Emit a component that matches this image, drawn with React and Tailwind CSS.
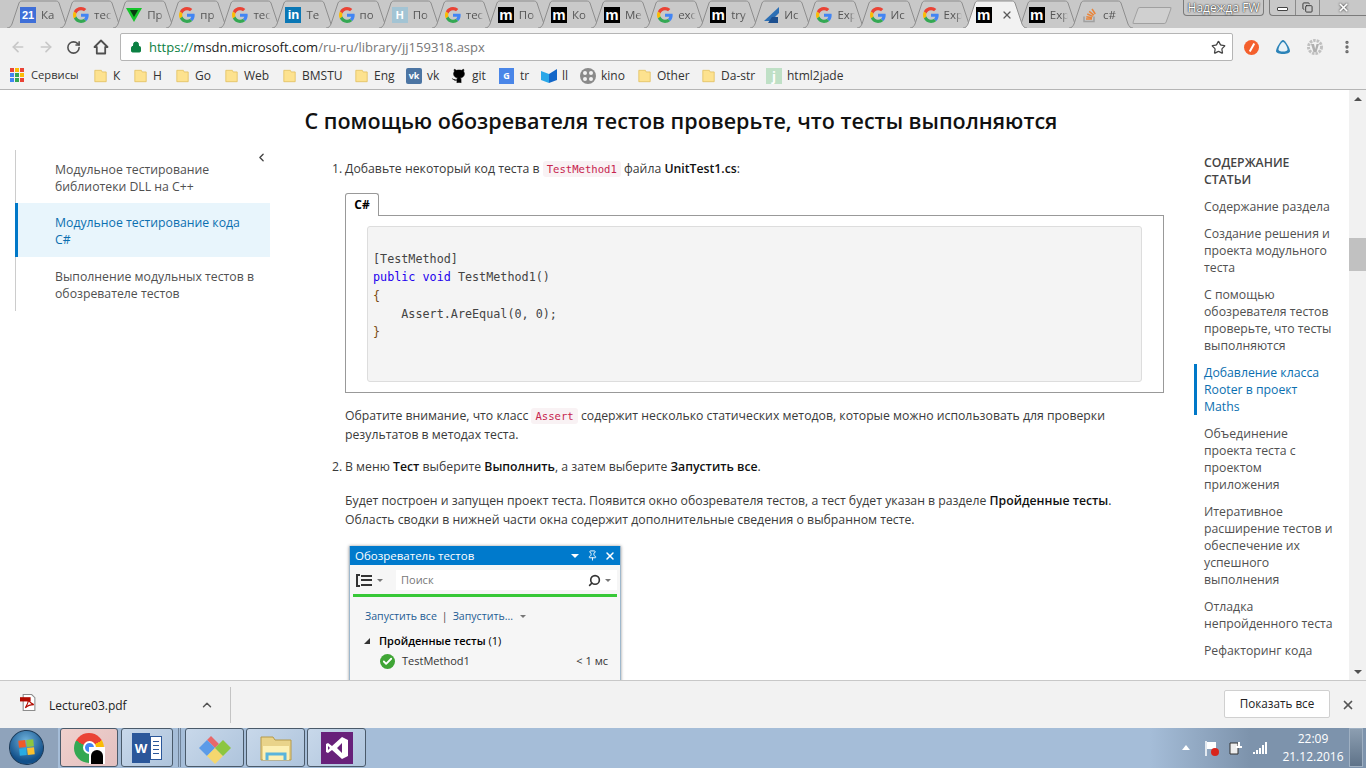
import { ArrowLeft, ArrowRight, RotateCw, Star, Lock, MoreVertical, ChevronUp, ChevronLeft, X, Search, Pin, Copy, Github, Check } from "lucide-react";

const GoogleIcon = () => (
  <svg viewBox="0 0 48 48" className="w-[16px] h-[16px] shrink-0">
    <path fill="#ea4335" d="M24 9.5c3.5 0 6.700 1.300 9.100 3.500l6.800-6.800C35.800 2.400 30.300 0 24 0 14.600 0 6.500 5.400 2.600 13.200l7.900 6.100C12.400 13.600 17.700 9.500 24 9.500z" />
    <path fill="#4285f4" d="M47 24.500c0-1.600-.2-3.200-.4-4.500H24v9h12.900c-.6 3-2.200 5.400-4.700 7.100l7.600 5.900C44.300 37.900 47 31.800 47 24.500z" />
    <path fill="#fbbc05" d="M10.500 28.700C10 27.300 9.700 25.700 9.700 24s.3-3.300.8-4.700l-7.900-6.100C.9 16.400 0 20.100 0 24s.9 7.600 2.600 10.800l7.900-6.100z" />
    <path fill="#34a853" d="M24 48c6.300 0 11.800-2.100 15.800-5.900l-7.600-5.900c-2.200 1.500-4.900 2.300-8.200 2.300-6.300 0-11.600-4.100-13.500-9.800l-7.900 6.100C6.500 42.600 14.600 48 24 48z" />
  </svg>
);

const MediumIcon = () => (
  <div className="w-[16px] h-[16px] shrink-0 bg-black text-white flex items-center justify-center text-[15px] leading-none font-bold font-['Liberation_Sans',sans-serif] pb-[2px]">m</div>
);

const tabIcon = (kind) => {
  if (kind === "g") return <GoogleIcon />;
  if (kind === "m") return <MediumIcon />;
  if (kind === "cal") return <div className="w-[16px] h-[16px] shrink-0 bg-[#3f6fd8] text-white text-[11px] leading-[17px] text-center font-bold font-['Liberation_Sans',sans-serif]">21</div>;
  if (kind === "v")
    return (
      <svg viewBox="0 0 16 16" className="w-[16px] h-[16px] shrink-0">
        <path d="M0 1h16L8 15z" fill="#16c42c" />
        <path d="M4 3h8L8 10z" fill="#0a3a12" />
      </svg>
    );
  if (kind === "in") return <div className="w-[16px] h-[16px] shrink-0 bg-[#0a77b5] text-white text-[13px] leading-[16px] text-center font-bold font-['Liberation_Sans',sans-serif]">in</div>;
  if (kind === "h") return <div className="w-[16px] h-[16px] shrink-0 bg-[#a3c4d4] text-white text-[11px] leading-[16px] text-center font-bold font-['Liberation_Sans',sans-serif]">Н</div>;
  if (kind === "blue")
    return (
      <svg viewBox="0 0 16 16" className="w-[16px] h-[16px] shrink-0">
        <path d="M16 0v6L8 14H1z" fill="#2c6fb5" />
        <path d="M9 10h6v6H5z" fill="#1c4f8f" />
      </svg>
    );
  return (
    <svg viewBox="0 0 16 16" className="w-[16px] h-[16px] shrink-0" fill="none" stroke="#e8843a" strokeWidth="1.500">
      <path d="M2 9.500v5h10v-5" stroke="#a0a0a0" />
      <path d="M4 12h6M4.300 9.700l5.800 1M5.300 7l5.500 2.400M7.200 4.300l4.600 3.800M10 2l3.300 5" />
    </svg>
  );
};

const tabs = [
  ["cal", "Ка"], ["g", "тес"], ["v", "Пр"], ["g", "пр"], ["g", "тес"], ["in", "Те"], ["g", "по"], ["h", "По"], ["g", "тес"],
  ["m", "По"], ["m", "Ко"], ["m", "Ме"], ["g", "exc"], ["m", "try"], ["blue", "Ис"], ["g", "Exp"], ["g", "Ис"], ["g", "Exp"],
  ["m", "", true], ["m", "Exp"], ["so", "c#"],
];

const Tab = ({ kind, label, active }) => (
  <div className={`relative w-[53.100px] h-[28px] shrink-0 ${active ? "z-10" : ""}`}>
    <svg viewBox="0 0 64 28" preserveAspectRatio="none" className="absolute left-0 top-0 w-[64px] h-[28px]">
      <path d="M0 28 C3 28 4 26 5 24 L12 3 C13 1 14 1 16 1 H48 C50 1 51 1 52 3 L59 24 C60 26 61 28 64 28" fill={active ? "#f2f2f2" : "#c9c9c9"} stroke="#8e8e8e" />
    </svg>
    <div className="relative flex items-center gap-[5px] pl-[13px] pt-[7px] w-[60px]">
      {tabIcon(kind)}
      {active ? (
        <X className="w-[12px] h-[12px] ml-[4px] text-[#5a5a5a]" strokeWidth={2.500} />
      ) : (
        <span className="w-[18px] overflow-hidden whitespace-nowrap text-[11.500px] leading-[16px] text-[#555] [mask-image:linear-gradient(to_right,black_65%,transparent)]">{label}</span>
      )}
    </div>
  </div>
);

const Folder = () => (
  <svg viewBox="0 0 16 16" className="w-[13px] h-[16px] shrink-0">
    <path d="M1 1h8l1 2h5v12H1z" fill="#fde28f" stroke="#e3c060" />
  </svg>
);

const bookmarks = [
  { label: "К", w: "w-[40px]" },
  { label: "Н", w: "w-[42px]" },
  { label: "Go", w: "w-[49px]" },
  { label: "Web", w: "w-[58px]" },
  { label: "BMSTU", w: "w-[72px]" },
  { label: "Eng", w: "w-[51px]" },
  { label: "vk", w: "w-[45px]", icon: <div className="w-[16px] h-[16px] bg-[#4c75a3] rounded-[2px] text-white text-[9px] leading-[16px] text-center font-bold">vk</div> },
  { label: "git", w: "w-[48px]", icon: <Github className="w-[16px] h-[16px] text-black fill-black" strokeWidth={1} /> },
  { label: "tr", w: "w-[42px]", icon: <div className="w-[15px] h-[16px] bg-[#4a86e8] text-white text-[9px] leading-[15px] text-center font-bold">G</div> },
  { label: "ll", w: "w-[39px]", icon: <svg viewBox="0 0 16 16" className="w-[16px] h-[16px]"><path d="M0 3l8 3v9l-8-3z" fill="#2aa7e8" /><path d="M16 1v11l-8 3V6z" fill="#1367c9" /></svg> },
  {
    label: "kino",
    w: "w-[58px]",
    icon: (
      <div className="w-[16px] h-[16px] rounded-full bg-[#8a8a8a] grid grid-cols-2 gap-[2px] p-[3px]">
        <div className="rounded-full bg-[#f2f2f2]" />
        <div className="rounded-full bg-[#f2f2f2]" />
        <div className="rounded-full bg-[#f2f2f2]" />
        <div className="rounded-full bg-[#f2f2f2]" />
      </div>
    ),
  },
  { label: "Other", w: "w-[64px]" },
  { label: "Da-str", w: "w-[64px]" },
  { label: "html2jade", w: "w-[70px]", icon: <div className="w-[16px] h-[16px] bg-[#bfe0c6] text-white text-[13px] leading-[16px] text-center font-bold">j</div> },
];

const TabStrip = () => (
  <div className="h-[28px] bg-[#c8c8c8] flex pl-[7px] relative shrink-0">
    {tabs.map(([kind, label, active], i) => (
      <Tab key={i} kind={kind} label={label} active={active} />
    ))}
    <div className="w-[34px] h-[17px] mt-[7px] ml-[13px] shrink-0 bg-[#d0d0d0] border border-[#a0a0a0] -skew-x-[20deg] rounded-[2px]" />
    <div className="absolute left-[1183px] top-0 h-[16px] w-[81px] bg-[#c8c8c8] border border-t-0 border-[#7b7b7b] rounded-b-[4px] text-white text-[12px] leading-[15px] text-center [text-shadow:0_0_2px_#222,0_0_1px_#222]">Надежда FW</div>
    <div className="absolute left-[1269px] top-0 h-[16px] w-[97px] bg-[#c8c8c8] border border-t-0 border-r-0 border-[#7b7b7b] rounded-bl-[4px] flex items-center">
      <div className="w-[25px] h-full flex items-center justify-center"><div className="w-[11px] h-[4px] bg-white border border-[#444] rounded-[1px] mt-[3px]" /></div>
      <div className="w-[25px] h-full flex items-center justify-center border-x border-[#8a8a8a]"><Copy className="w-[11px] h-[11px] text-[#333]" /></div>
      <div className="flex-1 h-full flex items-center justify-center"><X className="w-[13px] h-[13px] text-white [filter:drop-shadow(0_0_1px_#222)]" strokeWidth={3} /></div>
    </div>
  </div>
);

const Toolbar = () => (
  <div className="h-[34px] bg-[#f2f2f2] flex items-start pt-[5px] shrink-0">
    <div className="flex items-center gap-[12px] pl-[10px] pt-[6px] w-[120px]">
      <ArrowLeft className="w-[16px] h-[16px] text-[#c8c8c8]" strokeWidth={2.500} />
      <ArrowRight className="w-[16px] h-[16px] text-[#c8c8c8]" strokeWidth={2.500} />
      <RotateCw className="w-[15px] h-[15px] text-[#505050]" strokeWidth={2.500} />
      <svg viewBox="0 0 16 16" className="w-[16px] h-[16px]" fill="none" stroke="#505050" strokeWidth="1.800">
        <path d="M8 1.500L1.500 8h2.300v6.500h8.400V8h2.300z" strokeLinejoin="round" />
      </svg>
    </div>
    <div className="w-[1113px] h-[28px] bg-white border border-[#b5b5b5] rounded-[2px] flex items-center pl-[9px] pr-[6px] text-[13px]">
      <Lock className="w-[12px] h-[12px] text-[#0b8043] fill-[#0b8043] mr-[7px]" />
      <span className="text-[#0b8043] pt-px">https://</span>
      <span className="text-[#222] pt-px">msdn.microsoft.com</span>
      <span className="text-[#777] pt-px">/ru-ru/library/jj159318.aspx</span>
      <Star className="w-[15px] h-[15px] ml-auto text-[#444]" strokeWidth={2} />
    </div>
    <div className="flex items-center pl-[11px] pt-[6px] gap-[16px]">
      <div className="w-[15px] h-[15px] rounded-full bg-[#f4602d] flex items-center justify-center"><div className="w-[2px] h-[9px] bg-white rotate-[30deg]" /></div>
      <svg viewBox="0 0 16 16" className="w-[16px] h-[16px]">
        <path d="M8 1C6 1 1 9 1 12c0 2 3 3 7 3s7-1 7-3c0-3-5-11-7-11z" fill="#2b83b8" />
        <path d="M8 3C6.500 3 3.500 8 3.500 10.500c0 1.500 2 2 4.500 2s4.500-.5 4.500-2C12.500 8 9.500 3 8 3z" fill="#e8f2f8" />
      </svg>
      <svg viewBox="0 0 16 16" className="w-[16px] h-[16px]">
        <circle cx="8" cy="8" r="6.500" fill="none" stroke="#c0c0c0" strokeWidth="3" strokeDasharray="2.500 1" />
        <path d="M4 5h3l1.200 5 1.300-5H12l-2.500 8h-3z" fill="#b0b0b0" />
      </svg>
      <MoreVertical className="w-[16px] h-[16px] text-[#666]" strokeWidth={3} />
    </div>
  </div>
);

const BookmarksBar = () => (
  <div className="h-[28px] bg-[#f2f2f2] border-b border-[#b5b5b5] flex items-center pl-[10px] text-[12px] text-[#333] shrink-0">
    <div className="w-[84px] flex items-center gap-[7px]">
      <div className="grid grid-cols-3 gap-[1px] w-[14px] shrink-0">
        <div className="h-[4px] bg-[#ea4335]" />
        <div className="h-[4px] bg-[#fbbc05]" />
        <div className="h-[4px] bg-[#ea4335]" />
        <div className="h-[4px] bg-[#4285f4]" />
        <div className="h-[4px] bg-[#34a853]" />
        <div className="h-[4px] bg-[#fbbc05]" />
        <div className="h-[4px] bg-[#4285f4]" />
        <div className="h-[4px] bg-[#34a853]" />
        <div className="h-[4px] bg-[#ea4335]" />
      </div>
      <span className="text-[11.200px]">Сервисы</span>
    </div>
    {bookmarks.map((b) => (
      <div key={b.label} className={`${b.w} flex items-center shrink-0`}>
        <div className={`${b.icon ? "w-[21px]" : "w-[19px]"} shrink-0`}>{b.icon || <Folder />}</div>
        <span className="whitespace-nowrap">{b.label}</span>
      </div>
    ))}
  </div>
);

const LeftNav = () => (
  <div className="w-[255px] ml-[15px] shrink-0 pt-[60px]">
    <div className="relative border-l border-[#ccc] text-[12.250px] leading-[17px] text-[#505050]">
      <ChevronLeft className="absolute left-[239px] top-[1px] w-[13px] h-[13px] text-[#444]" strokeWidth={2.500} />
      <div className="h-[53px] pl-[39px] pr-[15px] pt-[11px]">Модульное тестирование библиотеки DLL на C++</div>
      <div className="h-[54px] pl-[37px] pr-[15px] pt-[11px] bg-[#e8f5fc] border-l-[3px] border-[#0078c8] text-[#0b6fb0] -ml-px">Модульное тестирование кода C#</div>
      <div className="h-[54px] pl-[39px] pr-[15px] pt-[11px]">Выполнение модульных тестов в обозревателе тестов</div>
    </div>
  </div>
);

const Code = ({ children }) => (
  <code className="bg-[#f9f2f4] text-[#c7254e] rounded-[3px] px-[4px] py-[2px] text-[10.600px] leading-none font-['DejaVu_Sans_Mono',monospace]">{children}</code>
);

const Arrow = () => <div className="w-0 h-0 border-x-[3px] border-x-transparent border-t-[3px] border-t-[#777]" />;

const TestExplorer = () => (
  <div className="w-[272px] h-[140px] ml-[4px] mt-[17px] bg-[#f6f6f6] border-x border-[#9fb8cc] shadow-[0_0_3px_#999] overflow-hidden font-['Open_Sans',sans-serif] text-[#333]">
    <div className="h-[19px] bg-[#007acc] text-white text-[11.500px] leading-[19px] pl-[5px] pr-[4px] flex items-center">
      <span>Обозреватель тестов</span>
      <div className="ml-auto flex items-center gap-[4px]">
        <div className="w-0 h-0 border-x-[4px] border-x-transparent border-t-[4px] border-t-white" />
        <Pin className="w-[11px] h-[11px] ml-[4px]" />
        <X className="w-[12px] h-[12px] ml-[2px]" strokeWidth={3} />
      </div>
    </div>
    <div className="flex items-center pl-[6px] pr-[3px] pt-[5px]">
      <div className="w-[40px] flex items-center gap-[5px] text-[#333]">
        <div className="w-[16px] h-[13px] flex gap-[1px]">
          <div className="w-[4px] border-2 border-r-0 border-[#333]" />
          <div className="flex-1 flex flex-col justify-between py-[1px]">
            <div className="h-[2px] bg-[#333]" />
            <div className="h-[2px] bg-[#333]" />
            <div className="h-[2px] bg-[#333]" />
          </div>
        </div>
        <Arrow />
      </div>
      <div className="flex-1 h-[20px] bg-white flex items-center pl-[5px] pr-[6px] text-[11px] text-[#777]">
        <span>Поиск</span>
        <Search className="w-[13px] h-[13px] ml-auto text-[#333] -scale-x-100" strokeWidth={3} />
        <div className="ml-[4px]"><Arrow /></div>
      </div>
    </div>
    <div className="h-[3px] bg-[#37c837] mx-[3px] mt-[4px]" />
    <div className="pl-[15px] pt-[12px] text-[10.600px] leading-[14px] text-[#1e5d94] flex items-center">
      <span>Запустить все</span>
      <span className="mx-[5px] text-[#444]">|</span>
      <span>Запустить...</span>
      <div className="ml-[7px]"><Arrow /></div>
    </div>
    <div className="pl-[14px] pt-[11px] text-[11px] leading-[14px] flex items-center gap-[9px]">
      <div className="w-0 h-0 border-l-[6px] border-l-transparent border-b-[6px] border-b-[#333]" />
      <span className="text-black"><b className="font-semibold">Пройденные тесты</b> (1)</span>
    </div>
    <div className="pl-[30px] pr-[12px] pt-[5px] text-[11px] flex items-center">
      <div className="w-[15px] h-[15px] rounded-full bg-[#3fa535] flex items-center justify-center"><Check className="w-[11px] h-[11px] text-white" strokeWidth={4} /></div>
      <span className="ml-[7px]">TestMethod1</span>
      <span className="ml-auto">&lt; 1 мс</span>
    </div>
  </div>
);

const Main = () => (
  <div className="w-[834px] ml-[60px] shrink-0 text-[12.250px] text-[#3a3a3a]">
    <div className="flex pt-[69px] h-[91px]">
      <span className="w-[15px] pl-[2px] leading-[20px]">1.</span>
      <p className="leading-[20px]">Добавьте некоторый код теста в <Code>TestMethod1</Code> файла <b className="font-semibold text-[#111]">UnitTest1.cs</b>:</p>
    </div>
    <div className="ml-[15px] w-[819px] mt-[12px]">
      <div className="w-[34px] h-[23px] relative z-10 bg-white border border-b-0 border-[#999] rounded-t-[3px] text-center font-bold text-[12px] leading-[21px] text-black">C#</div>
      <div className="h-[178px] -mt-px border border-[#999] px-[21px] pt-[10px]">
        <pre className="h-[156px] bg-[#f4f4f4] border border-[#ddd] rounded-[3px] pl-[5px] pt-[23px] text-[11.750px] leading-[18.300px] text-[#444] font-['DejaVu_Sans_Mono',monospace]">
          {"[TestMethod]\n"}
          <span className="text-[#2200ee]">public void</span>
          {" TestMethod1()\n"}
          <span className="text-[#7a4a10]">{"{"}</span>
          {"\n    Assert.AreEqual(0, 0);\n"}
          <span className="text-[#7a4a10]">{"}"}</span>
        </pre>
      </div>
      <p className="pt-[13px] leading-[19px]">Обратите внимание, что класс <Code>Assert</Code> содержит несколько статических методов, которые можно использовать для проверки результатов в методах теста.</p>
    </div>
    <div className="flex pt-[13px] leading-[20px]">
      <span className="w-[15px] pl-[2px]">2.</span>
      <p>В меню <b className="font-semibold text-[#111]">Тест</b> выберите <b className="font-semibold text-[#111]">Выполнить</b>, а затем выберите <b className="font-semibold text-[#111]">Запустить все</b>.</p>
    </div>
    <div className="ml-[15px] w-[819px]">
      <p className="pt-[14px] leading-[19px]">Будет построен и запущен проект теста. Появится окно обозревателя тестов, а тест будет указан в разделе <b className="font-semibold text-[#111]">Пройденные тесты</b>. Область сводки в нижней части окна содержит дополнительные сведения о выбранном тесте.</p>
      <TestExplorer />
    </div>
  </div>
);

const outline = [
  "Содержание раздела",
  "Создание решения и проекта модульного теста",
  "С помощью обозревателя тестов проверьте, что тесты выполняются",
  "Добавление класса Rooter в проект Maths",
  "Объединение проекта теста с проектом приложения",
  "Итеративное расширение тестов и обеспечение их успешного выполнения",
  "Отладка непройденного теста",
  "Рефакторинг кода",
];

const RightNav = () => (
  <div className="w-[155px] ml-[30px] shrink-0 pt-[64px] text-[12.250px] leading-[17px] text-[#505050]">
    <div className="pl-[10px] font-semibold text-[#444] mb-[10px]">СОДЕРЖАНИЕ<br />СТАТЬИ</div>
    {outline.map((item, i) => (
      <div key={item} className={i === 3 ? "border-l-[3px] border-[#0078c8] pl-[7px] pr-[24px] text-[#0b6fb0] mb-[10px]" : "pl-[10px] pr-[12px] mb-[10px]"}>
        {item}
      </div>
    ))}
  </div>
);

const Scrollbar = () => (
  <div className="w-[17px] ml-auto bg-[#f1f1f1] shrink-0 flex flex-col items-center h-full">
    <div className="h-[17px] flex items-center justify-center"><div className="w-0 h-0 border-x-[4px] border-x-transparent border-b-[4px] border-b-[#505050]" /></div>
    <div className="w-[17px] h-[33px] mt-[131px] bg-[#c1c1c1]" />
    <div className="mt-auto h-[17px] flex items-center justify-center"><div className="w-0 h-0 border-x-[4px] border-x-transparent border-t-[4px] border-t-[#505050]" /></div>
  </div>
);

const DownloadShelf = () => (
  <div className="h-[48px] bg-[#f2f2f2] border-t border-[#c8c8c8] flex items-center pl-[20px] pr-[11px] shrink-0">
    <svg viewBox="0 0 16 16" className="w-[17px] h-[17px] mb-[4px] shrink-0">
      <path d="M3 .5h8l3 3v12H3z" fill="#fff" stroke="#8c8c8c" />
      <path d="M0 3h10v4H0z" fill="#b30b00" />
      <path d="M5 13c2-3 3-6 3-8 1 3 2 4 5 5-3 0-6 1-8 3z" fill="none" stroke="#b30b00" />
    </svg>
    <span className="ml-[12px] mt-[3px] text-[12px] text-[#222]">Lecture03.pdf</span>
    <ChevronUp className="w-[14px] h-[14px] ml-[73px] text-[#555]" strokeWidth={2.500} />
    <div className="w-px h-[36px] bg-[#c4c4c4] ml-[16px]" />
    <button className="ml-auto w-[106px] h-[28px] mb-[2px] bg-white border border-[#d0d0d0] rounded-[2px] text-[11.700px] text-[#222]">Показать все</button>
    <X className="w-[14px] h-[14px] ml-[11px] text-[#555]" strokeWidth={3} />
  </div>
);

const TaskButton = ({ w, active, children }) => (
  <div className={`${w} h-[39px] shrink-0 rounded-[3px] border border-[#4a5a6a] flex items-center justify-center ${active ? "bg-[linear-gradient(135deg,#f0d0cc,#e2c0c0)]" : "bg-[linear-gradient(135deg,#c8d8ea,#aec4dc)]"}`}>
    {children}
  </div>
);

const Taskbar = () => (
  <div className="h-[40px] shrink-0 flex items-end pb-px bg-[linear-gradient(to_right,#8fa3bb_0,#8fa3bb_58px,#a5bdd8_58px,#a5bdd8_1150px,#7d93ac_1250px,#7d93ac_100%)] font-['Open_Sans',sans-serif]">
    <div className="w-[60px] h-[39px] shrink-0 flex items-center pl-[9px]">
      <div className="w-[35px] h-[35px] rounded-full bg-[radial-gradient(circle_at_50%_30%,#6fb2dc,#12508a_70%)] border border-[#1c3b5a] grid grid-cols-2 gap-[1px] p-[9px] -rotate-6">
        <div className="bg-[#f05a28]" />
        <div className="bg-[#8cc63f]" />
        <div className="bg-[#29abe2]" />
        <div className="bg-[#fbc02d]" />
      </div>
    </div>
    <TaskButton w="w-[58px]" active>
      <div className="relative w-[30px] h-[30px] rounded-full bg-[conic-gradient(from_300deg,#ea4335_0_33%,#fbbc05_33%_66%,#34a853_66%_100%)] flex items-center justify-center">
        <div className="w-[13px] h-[13px] rounded-full bg-[#4285f4] border-2 border-white" />
        <div className="absolute left-[15px] top-[14px] w-[16px] h-[17px] bg-white flex items-end justify-center">
          <div className="w-[12px] h-[14px] bg-black rounded-t-full" />
        </div>
      </div>
    </TaskButton>
    <div className="w-[3px] shrink-0" />
    <TaskButton w="w-[52px]">
      <div className="w-[30px] h-[30px] flex items-center">
        <div className="w-[18px] h-[30px] bg-[#2b579a] text-white text-[13px] font-bold leading-[30px] text-center">W</div>
        <div className="w-[12px] h-[24px] bg-white border border-[#2b579a] flex flex-col justify-around px-[2px] py-[3px]">
          <div className="h-px bg-[#2b579a]" />
          <div className="h-px bg-[#2b579a]" />
          <div className="h-px bg-[#2b579a]" />
          <div className="h-px bg-[#2b579a]" />
        </div>
      </div>
    </TaskButton>
    <div className="w-[12px] shrink-0 flex justify-center">
      <div className="w-[3px] h-[39px] border-x border-[#6f8298]" />
    </div>
    <TaskButton w="w-[59px]">
      <svg viewBox="0 0 32 32" className="w-[32px] h-[32px]">
        <path d="M16 16L8 8l4-4 8 8z" fill="#e8686a" />
        <path d="M16 16L8 24 0 16l8-8z" fill="#5b9be8" />
        <path d="M16 16l8 8-8 8-8-8z" fill="#f5d76e" />
        <path d="M16 16l8-8 8 8-8 8z" fill="#8cc63f" />
      </svg>
    </TaskButton>
    <div className="w-[2px] shrink-0" />
    <TaskButton w="w-[59px]">
      <svg viewBox="0 0 32 28" className="w-[32px] h-[28px]">
        <path d="M1 3h12l2 3h16v20H1z" fill="#e9d38a" stroke="#b59a4a" />
        <path d="M3 12h26v14H3z" fill="#fdf0b5" />
        <path d="M7 26v-6h18v6" fill="none" stroke="#5ab4dc" strokeWidth="3" />
      </svg>
    </TaskButton>
    <div className="w-[2px] shrink-0" />
    <TaskButton w="w-[59px]">
      <div className="w-[32px] h-[32px] bg-[#68217a] flex items-center justify-center">
        <svg viewBox="0 0 24 24" className="w-[24px] h-[24px]">
          <path d="M17 1l6 3v16l-6 3-10-9-4 3-2-1V8l2-1 4 3zM17 7l-5 5 5 5zM3 10v4l2-2z" fill="#fff" fillRule="evenodd" />
        </svg>
      </div>
    </TaskButton>
    <div className="ml-[816px] flex items-center h-[39px] text-white shrink-0">
      <div className="w-0 h-0 border-x-[4px] border-x-transparent border-b-[5px] border-b-white" />
      <svg viewBox="0 0 16 16" className="w-[16px] h-[16px] ml-[14px]">
        <path d="M2 1v15" stroke="#fff" strokeWidth="1.500" />
        <path d="M3 2h9v7H3z" fill="#fff" />
        <circle cx="11" cy="12" r="4" fill="#d9251c" />
      </svg>
      <svg viewBox="0 0 16 16" className="w-[16px] h-[16px] ml-[8px]">
        <path d="M2 3h8v11H2z" fill="#eee" stroke="#333" />
        <path d="M8 7h6M11 2v5" stroke="#fff" strokeWidth="2" />
      </svg>
      <div className="flex items-end gap-[1px] ml-[9px] h-[12px]">
        <div className="w-[2px] h-[2px] bg-white" />
        <div className="w-[2px] h-[4px] bg-white" />
        <div className="w-[2px] h-[6px] bg-white" />
        <div className="w-[2px] h-[9px] bg-white" />
        <div className="w-[2px] h-[12px] bg-white" />
      </div>
      <div className="ml-[14px] w-[64px] text-center text-[12px] leading-[18px]">22:09<br />21.12.2016</div>
      <div className="ml-[4px] w-[14px] h-[39px] bg-[linear-gradient(to_bottom,#8c9eb1,#5f7389)] border border-[#9fb0c2]" />
    </div>
  </div>
);

export default function App() {
  return (
    <div className="w-[1366px] h-[768px] flex flex-col overflow-hidden bg-white font-['Open_Sans',sans-serif]">
      <TabStrip />
      <Toolbar />
      <BookmarksBar />
      <div className="flex-1 min-h-0 flex overflow-hidden relative">
        <h1 className="absolute left-0 w-[1362px] top-[17px] text-center text-[21.500px] leading-[28px] font-semibold text-[#111]">С помощью обозревателя тестов проверьте, что тесты выполняются</h1>
        <LeftNav />
        <Main />
        <RightNav />
        <Scrollbar />
      </div>
      <DownloadShelf />
      <Taskbar />
    </div>
  );
}
